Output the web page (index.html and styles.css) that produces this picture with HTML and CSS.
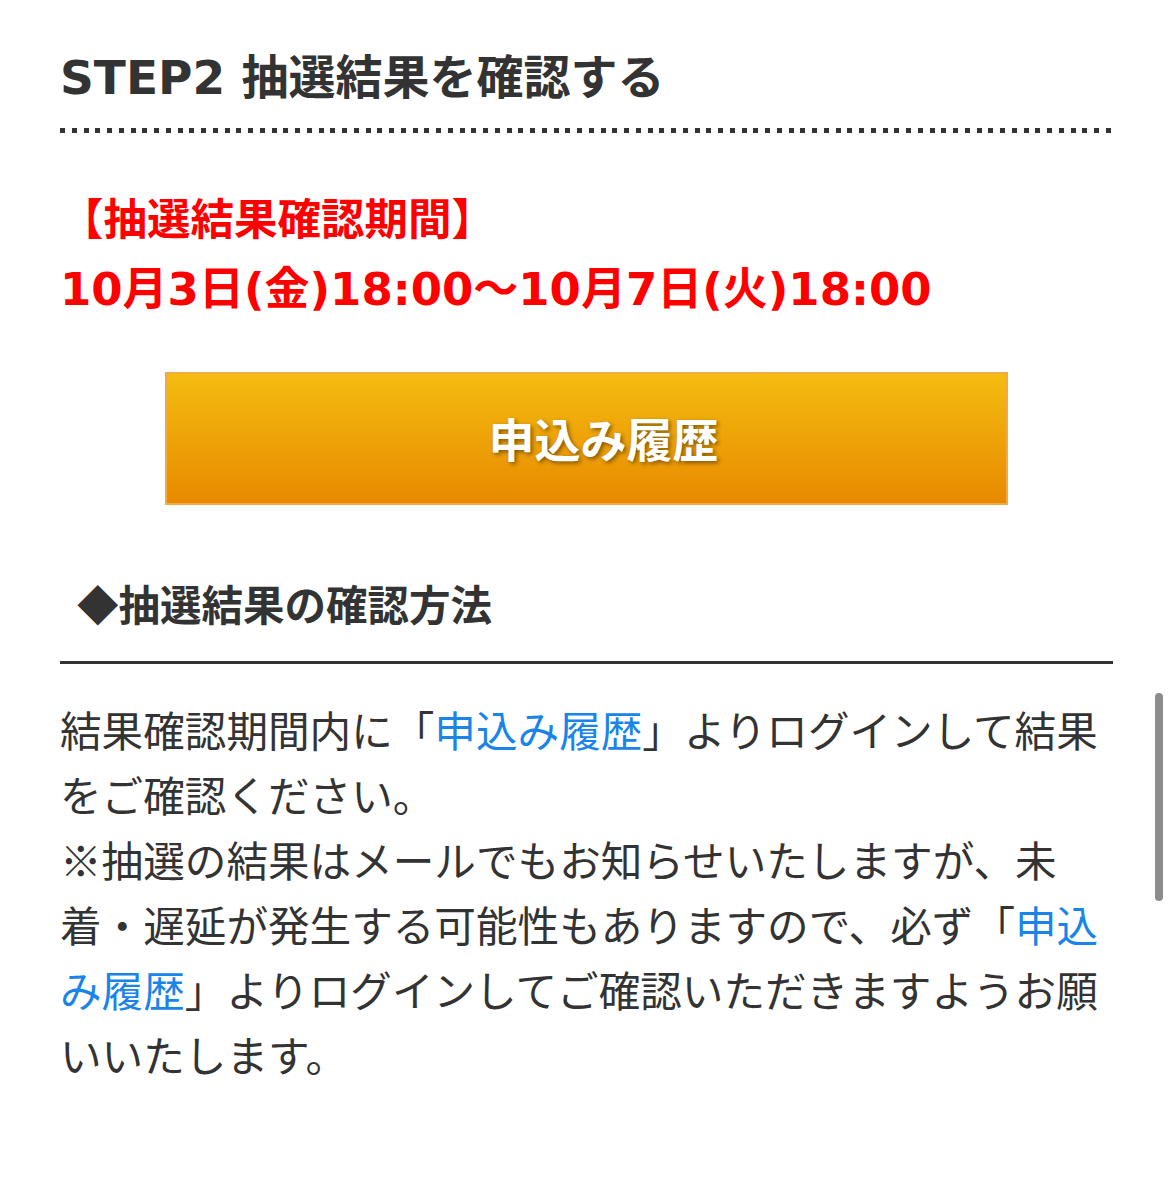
FILE: index.html
```html
<!DOCTYPE html>
<html lang="ja">
<head>
  <meta charset="UTF-8" />
  <meta name="viewport" content="width=device-width, initial-scale=1.0"/>
  <title>STEP2 抽選結果を確認する</title>
  <link rel="stylesheet" href="styles.css">
</head>
<body>
  <main class="step">
    <h2 class="step-title"><span class="en">STEP2 </span>抽選結果を確認する</h2>

    <div class="period">
      <p class="period-label">【抽選結果確認期間】</p>
      <p class="period-date">10月3日(金)18:00〜10月7日(火)18:00</p>
    </div>

    <a class="history-btn" href="#">申込み履歴</a>

    <h3 class="sub-title">◆抽選結果の確認方法</h3>
    <p class="guide">結果確認期間内に「<a href="#">申込み履歴</a>」よりログインして結果をご確認ください。<br>※抽選の結果はメールでもお知らせいたしますが、未着・遅延が発生する可能性もありますので、必ず「<a href="#">申込み履歴</a>」よりログインしてご確認いただきますようお願いいたします。</p>
  </main>

  <div class="scroll-thumb"></div>
</body>
</html>
```

FILE: styles.css
```css
* {
  margin: 0;
  padding: 0;
  box-sizing: border-box;
}

body {
  background: #fff;
  color: #333;
  font-family: "Noto Sans CJK JP", sans-serif;
  position: relative;
  min-height: 1200px;
}

.step {
  padding: 44px 60px 80px;
}

/* heading with a square-dot rule under it */
.step-title {
  font-size: 47px;
  line-height: 60px;
  font-weight: 700;
  color: #333;
  padding-bottom: 25px;
  background: repeating-linear-gradient(to right, #333 0 5px, transparent 5px 11.75px) left bottom / 100% 5px no-repeat;
}

.step-title .en {
  font-family: "DejaVu Sans", sans-serif;
}

.period {
  margin-top: 48px;
  color: #ff0000;
  font-weight: 700;
}

.period-label {
  font-size: 43.5px;
  line-height: 72px;
}

.period-date {
  font-family: "DejaVu Sans", "Noto Sans CJK JP", sans-serif;
  font-size: 45px;
  line-height: 74px;
}

.history-btn {
  display: block;
  width: 80%;
  height: 133px;
  margin: 45px auto 0;
  padding-left: 34px;
  border: 2px solid #f2aa45;
  background: linear-gradient(#f4bc10, #e88a00);
  color: #fff;
  font-size: 46px;
  font-weight: 700;
  line-height: 127px;
  text-align: center;
  text-decoration: none;
  text-shadow: 2px 2px 4px rgba(0, 0, 0, 0.45);
}

.sub-title {
  margin-top: 68px;
  padding: 0 0 28px 17px;
  font-size: 41.5px;
  line-height: 60px;
  font-weight: 700;
  color: #333;
  border-bottom: 3px solid #333;
}

.guide {
  margin-top: 33px;
  font-size: 41.6px;
  line-height: 65px;
  color: #333;
}

.guide a {
  color: #1a85e8;
  text-decoration: none;
}

/* iOS style scroll indicator */
.scroll-thumb {
  position: absolute;
  top: 693px;
  left: 1155px;
  width: 8px;
  height: 208px;
  border-radius: 4px;
  background: #8c8c8c;
}
```
